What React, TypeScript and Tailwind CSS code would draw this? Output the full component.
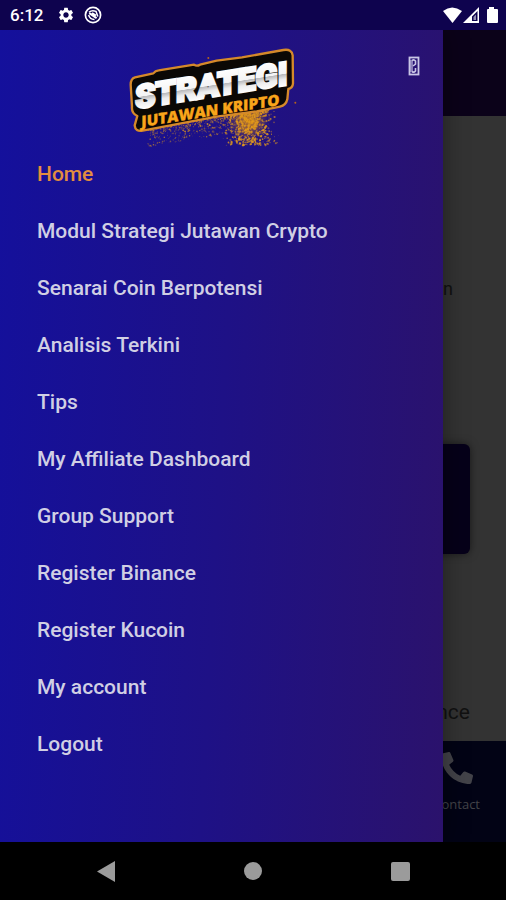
import React from "react";
import { FaPhoneAlt } from "react-icons/fa";
import { MdSettings } from "react-icons/md";

const MENU = [
  "Home",
  "Modul Strategi Jutawan Crypto",
  "Senarai Coin Berpotensi",
  "Analisis Terkini",
  "Tips",
  "My Affiliate Dashboard",
  "Group Support",
  "Register Binance",
  "Register Kucoin",
  "My account",
  "Logout",
];

type Speck = { x: number; y: number; r: number; o: number };

// Gold dust under the logo: densest around the lower right.
function makeDust(): Speck[] {
  let seed = 7;
  const rnd = () => {
    seed = (seed * 16807) % 2147483647;
    return seed / 2147483647;
  };
  const dust: Speck[] = [];
  for (let i = 0; i < 750; i++) {
    const a = (rnd() + rnd() + rnd()) / 3;
    dust.push({ x: 285 + a * 200, y: 212 + Math.pow(rnd(), 1.3) * 104, r: 1 + rnd() * 2.6, o: 0.3 + rnd() * 0.6 });
  }
  for (let i = 0; i < 600; i++) {
    const x = 80 + rnd() * 370;
    dust.push({ x, y: 270 - (x - 70) * 0.16 + Math.pow(rnd(), 2) * 52, r: 0.8 + rnd() * 2, o: 0.2 + rnd() * 0.5 });
  }
  return dust;
}
const DUST = makeDust();

const BADGE =
  "M45 112 L100 100 Q106 92 116 91 L222 74 Q230 80 240 74 L290 62 L366 52 L490 30 Q516 26 518 46 L519 130 Q518 144 505 147 L502 178 Q498 196 480 200 L410 214 L290 230 L68 272 Q46 276 44 256 L52 228 Q34 220 36 200 L32 134 Q32 116 45 112 Z";

function Logo() {
  return (
    <svg width="185" height="115" viewBox="0 0 555 345" role="img" aria-label="Strategi Jutawan Kripto">
      <defs>
        <linearGradient id="steel" gradientUnits="userSpaceOnUse" x1="0" y1="-78" x2="0" y2="6">
          <stop offset="0" stopColor="#ffffff" />
          <stop offset="0.52" stopColor="#f4f4f4" />
          <stop offset="0.54" stopColor="#b9b9bb" />
          <stop offset="0.72" stopColor="#ececec" />
          <stop offset="1" stopColor="#ffffff" />
        </linearGradient>
        <radialGradient id="glow">
          <stop offset="0" stopColor="#e8950c" stopOpacity="0.85" />
          <stop offset="1" stopColor="#c77a14" stopOpacity="0" />
        </radialGradient>
      </defs>
      <ellipse cx="385" cy="240" rx="60" ry="62" fill="url(#glow)" />
      {DUST.map((d, i) => (
        <circle key={i} cx={d.x} cy={d.y} r={d.r} fill="#e39a1c" opacity={d.o} />
      ))}
      <circle cx="265" cy="54" r="3" fill="#b5631c" />
      <circle cx="526" cy="188" r="3" fill="#b5631c" />
      <path d={BADGE} fill="#0b0805" stroke="#d5892a" strokeWidth="7" strokeLinejoin="round" />
      <g transform="translate(46 206) skewY(-9)" fontFamily="Roboto, sans-serif" fontWeight="900">
        <text x="0" y="0" fontSize="97" fill="url(#steel)" stroke="url(#steel)" strokeWidth="8">
          STRATEGI
        </text>
      </g>
      <g transform="translate(64 261) skewY(-9)" fontFamily="'Open Sans', sans-serif" fontWeight="800">
        <text x="0" y="0" fontSize="46" fill="#f9a51a" stroke="#f9a51a" strokeWidth="1">
          JUTAWAN KRIPTO
        </text>
      </g>
    </svg>
  );
}

function StatusBar() {
  return (
    <header className="flex h-[30px] shrink-0 items-center justify-between bg-[#0e034e] pl-[10px] pr-2 text-white">
      <div className="flex items-center">
        <span className="text-[17px] font-medium leading-5">6:12</span>
        <MdSettings className="ml-[14px] size-[18px]" aria-hidden="true" />
        <svg className="ml-[9px] size-[18px]" viewBox="0 0 18 18" fill="none" stroke="currentColor" aria-hidden="true">
          <circle cx="9" cy="9" r="7.6" strokeWidth="1.7" />
          <path d="M5 6.2 Q8 3.6 12 5.4 L13.8 10.5 M4.6 9 Q6 13.5 10.5 13.4" strokeWidth="1.5" />
          <path d="M5.2 7.2 L12.6 12.2 M8 7 L12 9.5" strokeWidth="2" />
        </svg>
      </div>
      <svg width="56" height="18" viewBox="0 0 56 18" fill="currentColor" aria-hidden="true">
        <path d="M1 5 Q10 -2 20 5 L10.5 17 Z" />
        <path d="M21 17 L37 1 V17 Z M30 10.5 V15 H35.5 V5 Z" fillRule="evenodd" />
        <path d="M31.5 11 L34 8.5 V14 H31.5 Z" opacity="0.55" />
        <path d="M47 1 H52 V3 H55 Q56 3 56 4 V16 Q56 17 55 17 H46 Q45 17 45 16 V4 Q45 3 46 3 H47 Z" />
      </svg>
    </header>
  );
}

function DimmedPage() {
  return (
    <main className="flex flex-1 flex-col bg-[#333333]">
      <div className="h-[86px] bg-[#0b0219]" />
      <p className="mr-[53px] mt-[161px] text-right text-[18px] leading-6 text-[#111111]">n</p>
      <div className="ml-9 mr-9 mt-[143px] h-[110px] rounded-md bg-[#060119] shadow-[0_0_8px_rgba(0,0,0,0.5)]" />
      <p className="mr-9 mt-[146px] text-right text-[21px] leading-6 text-[#111111]">nce</p>
      <nav className="mt-auto flex h-[101px] items-start justify-end bg-[#020315] pr-[26px] pt-[11px]">
        <a href="#contact" className="flex flex-col items-center gap-[10px] text-[#434349]">
          <FaPhoneAlt className="size-8" aria-hidden="true" />
          <span className="font-['Open_Sans',sans-serif] text-[13px] font-medium leading-5">Contact</span>
        </a>
      </nav>
    </main>
  );
}

function Drawer() {
  return (
    <aside className="absolute inset-y-0 left-0 w-7/8 bg-linear-[93deg] from-[#14109c] via-[#1e1186] to-[#2b126c] shadow-[0_0_24px_rgba(0,0,0,0.4)]">
      <div className="flex items-start justify-between pl-[120px] pr-[17px] pt-[10px]">
        <Logo />
        <button type="button" aria-label="Close menu" className="mt-[14px] flex size-6 items-center justify-center text-[#c9c6e6]">
          <svg width="12" height="20" viewBox="0 0 12 20" fill="none" aria-hidden="true">
            <rect x="1.5" y="1.5" width="9" height="17" stroke="currentColor" strokeWidth="1.8" />
            <path d="M4 4.5 Q6 3 7.5 5 V8 L5 10 M7.5 12 V15 Q6 17 4 15.5" stroke="currentColor" strokeWidth="1.6" />
            <path d="M3.5 4 V16" stroke="currentColor" strokeWidth="3" opacity="0.6" />
          </svg>
        </button>
      </div>
      <nav className="-mt-[10px] pl-[37px]">
        <ul>
          {MENU.map((label, i) => (
            <li key={label}>
              <a
                href="#menu"
                className={
                  i === 0
                    ? "flex h-[57px] items-center text-[21px] font-medium leading-6 text-[#e38d3f]"
                    : "flex h-[57px] items-center text-[21px] font-medium leading-6 text-[#d0cfe4]"
                }
              >
                {label}
              </a>
            </li>
          ))}
        </ul>
      </nav>
    </aside>
  );
}

function SystemBar() {
  return (
    <footer className="flex h-[58px] shrink-0 items-center justify-between bg-black px-[94px] text-[#9b9b9b]">
      <button type="button" aria-label="Back" className="flex size-6 items-center justify-center">
        <svg width="18" height="21" viewBox="0 0 18 21" fill="currentColor" aria-hidden="true">
          <path d="M0 10.5 L18 0 V21 Z" />
        </svg>
      </button>
      <button type="button" aria-label="Home screen" className="flex size-6 items-center justify-center">
        <span className="size-[18px] rounded-full bg-[#9b9b9b]" />
      </button>
      <button type="button" aria-label="Recent apps" className="flex size-6 items-center justify-center">
        <span className="size-[19px] rounded-[2px] bg-[#9b9b9b]" />
      </button>
    </footer>
  );
}

export default function App() {
  return (
    <div className="flex min-h-screen flex-col font-[Roboto,sans-serif]">
      <StatusBar />
      <div className="relative flex flex-1 flex-col overflow-hidden">
        <DimmedPage />
        <Drawer />
      </div>
      <SystemBar />
    </div>
  );
}
